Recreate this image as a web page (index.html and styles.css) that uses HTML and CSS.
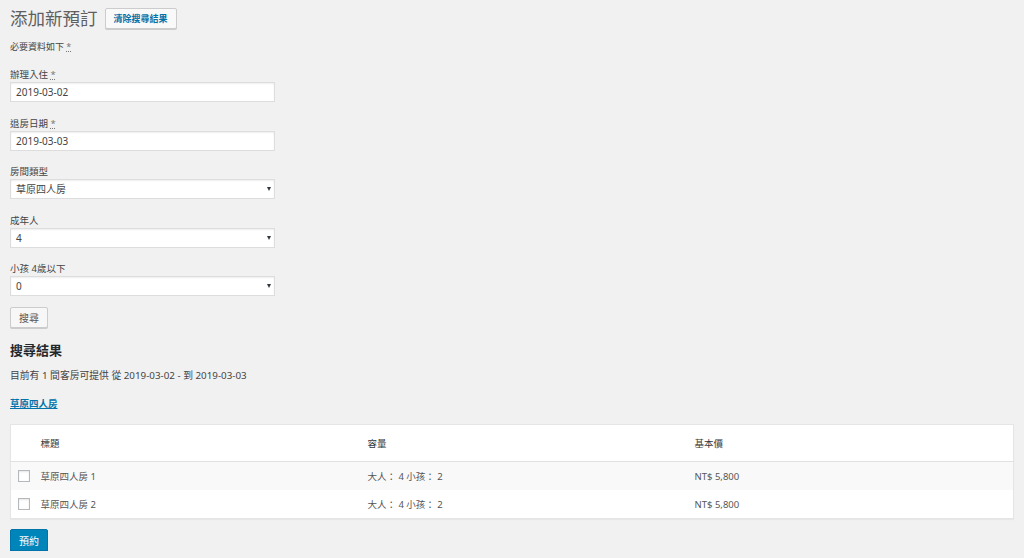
FILE: index.html
```html
<!DOCTYPE html>
<html lang="zh-Hant">
<head>
<meta charset="utf-8">
<title>添加新預訂</title>
<link rel="stylesheet" href="styles.css">
</head>
<body>
<div class="wrap">
  <div class="page-head">
    <h1 class="page-title">添加新預訂</h1>
    <a class="btn-clear" href="#">清除搜尋結果</a>
  </div>

  <form class="search-form">
    <p class="required-note">必要資料如下 <abbr class="req">*</abbr></p>

    <div class="field">
      <label class="field-label">辦理入住 <abbr class="req">*</abbr></label>
      <input class="text-input" type="text" value="2019-03-02">
    </div>
    <div class="field">
      <label class="field-label">退房日期 <abbr class="req">*</abbr></label>
      <input class="text-input" type="text" value="2019-03-03">
    </div>
    <div class="field">
      <label class="field-label">房間類型</label>
      <div class="select-wrap">
        <select class="select-input"><option>草原四人房</option></select>
      </div>
    </div>
    <div class="field">
      <label class="field-label">成年人</label>
      <div class="select-wrap">
        <select class="select-input"><option>4</option></select>
      </div>
    </div>
    <div class="field">
      <label class="field-label">小孩 4歲以下</label>
      <div class="select-wrap">
        <select class="select-input"><option>0</option></select>
      </div>
    </div>
    <button class="btn-secondary" type="button">搜尋</button>
  </form>

  <h2 class="results-title">搜尋結果</h2>
  <p class="results-summary">目前有 1 間客房可提供 從 2019-03-02 - 到 2019-03-03</p>
  <p class="room-type"><a class="room-link" href="#">草原四人房</a></p>

  <table class="rooms-table">
    <colgroup>
      <col class="col-check">
      <col class="col-title">
      <col class="col-cap">
      <col>
    </colgroup>
    <thead>
      <tr>
        <th class="cell-check"></th>
        <th>標題</th>
        <th>容量</th>
        <th>基本價</th>
      </tr>
    </thead>
    <tbody>
      <tr class="alt">
        <td class="cell-check"><span class="checkbox"></span></td>
        <td>草原四人房 1</td>
        <td>大人： 4 小孩： 2</td>
        <td>NT$ 5,800</td>
      </tr>
      <tr>
        <td class="cell-check"><span class="checkbox"></span></td>
        <td>草原四人房 2</td>
        <td>大人： 4 小孩： 2</td>
        <td>NT$ 5,800</td>
      </tr>
    </tbody>
  </table>

  <button class="btn-primary" type="button">預約</button>
</div>
</body>
</html>
```

FILE: styles.css
```css
* { box-sizing: border-box; }

html, body {
  margin: 0;
  padding: 0;
  background: #f1f1f1;
}

body {
  font-family: "Noto Sans", "Noto Sans CJK TC", sans-serif;
  font-size: 10px;
  color: #444;
}

.wrap {
  padding: 8px 10px 0 10px;
}

.page-head {
  display: flex;
  align-items: center;
  gap: 7px;
  height: 21px;
}

.page-title {
  margin: 0;
  font-size: 17.5px;
  font-weight: 400;
  line-height: 21px;
  color: #5f5f5f;
}

.btn-clear {
  display: inline-flex;
  align-items: center;
  height: 21px;
  padding: 0 8px;
  border: 1px solid #ccc;
  border-radius: 2px;
  background: #f9f9f9;
  box-shadow: 0 1px 0 #ccc;
  color: #0073aa;
  font-size: 9px;
  font-weight: 700;
  text-decoration: none;
}

.search-form {
  margin: 0;
}

.required-note {
  margin: 11px 0 14px 0;
  line-height: 14px;
  font-size: 9px;
  color: #444;
}

.req {
  text-decoration: underline dotted;
  color: #777;
  border: 0;
}

.field {
  margin-bottom: 14.5px;
}

.field-label {
  display: block;
  line-height: 14px;
  font-size: 9.5px;
  color: #444;
}

.text-input,
.select-input {
  display: block;
  width: 265px;
  height: 20px;
  margin: 0;
  padding: 0 5px;
  border: 1px solid #ddd;
  border-radius: 0;
  background: #fff;
  box-shadow: inset 0 1px 2px rgba(0,0,0,0.07);
  font-family: "Noto Sans", "Noto Sans CJK TC", sans-serif;
  font-size: 10px;
  color: #444;
  outline: none;
}

.select-input {
  -webkit-appearance: none;
  appearance: none;
}

.select-wrap {
  position: relative;
  width: 265px;
}

.select-wrap::after {
  content: "";
  position: absolute;
  right: 4px;
  top: 8px;
  border-left: 2.5px solid transparent;
  border-right: 2.5px solid transparent;
  border-top: 4px solid #32373c;
}

.btn-secondary {
  display: block;
  height: 21px;
  margin: -3.5px 0 0 0;
  padding: 0 8px;
  border: 1px solid #ccc;
  border-radius: 2px;
  background: #f7f7f7;
  box-shadow: 0 1px 0 #ccc;
  font-family: "Noto Sans", "Noto Sans CJK TC", sans-serif;
  font-size: 10px;
  color: #555;
}

.results-title {
  margin: 12px 0 0 0;
  font-size: 13px;
  line-height: 20px;
  font-weight: 700;
  color: #23282d;
}

.results-summary {
  margin: 9px 0 0 0;
  font-size: 9.8px;
  line-height: 14px;
  color: #444;
}

.room-type {
  margin: 13px 0 0 0;
  line-height: 14px;
}

.room-link {
  font-size: 9.5px;
  font-weight: 700;
  color: #0073aa;
  text-decoration: underline;
}

.rooms-table {
  width: 100%;
  margin-top: 13px;
  border: 1px solid #e5e5e5;
  border-collapse: collapse;
  border-spacing: 0;
  table-layout: fixed;
  background: #fff;
  box-shadow: 0 1px 1px rgba(0,0,0,0.04);
}

.col-check { width: 30px; }
.col-title { width: 327px; }
.col-cap { width: 327px; }

.rooms-table th,
.rooms-table td {
  padding: 0 10px 0 0;
  text-align: left;
  font-weight: 400;
  font-size: 9.5px;
  color: #555;
}

.rooms-table th {
  height: 37px;
  border-bottom: 1px solid #e1e1e1;
  color: #32373c;
}

.rooms-table td {
  height: 28.5px;
}

.rooms-table tr.alt td {
  background: #f9f9f9;
}

.rooms-table .cell-check {
  padding: 0 0 0 7px;
}

.checkbox {
  display: block;
  width: 12px;
  height: 12px;
  border: 1px solid #b4b9be;
  background: #fff;
  box-shadow: inset 0 1px 2px rgba(0,0,0,0.1);
}

.btn-primary {
  display: block;
  height: 22px;
  margin-top: 10px;
  padding: 0 8px;
  border: 1px solid #0073aa;
  border-radius: 2px;
  background: #0085ba;
  box-shadow: 0 1px 0 #006799;
  font-family: "Noto Sans", "Noto Sans CJK TC", sans-serif;
  font-size: 10px;
  color: #fff;
}
```
